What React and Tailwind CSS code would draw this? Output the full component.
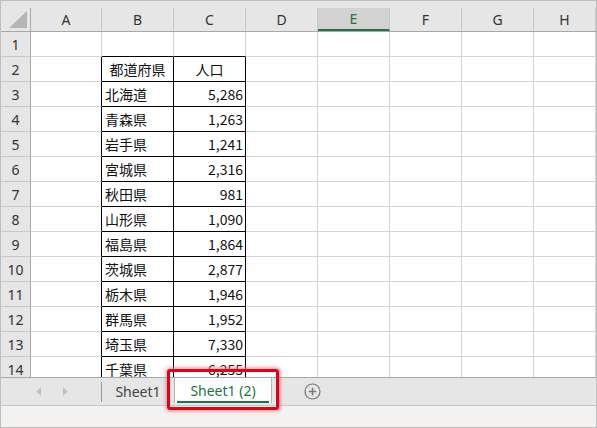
import React from "react";

const cols = ["A", "B", "C", "D", "E", "F", "G", "H"];
const colW = ["w-[71px]", "w-[72px]", "w-[72px]", "w-[72px]", "w-[72px]", "w-[72px]", "w-[72px]", "flex-1"];

const data = [
  ["北海道", "5,286"],
  ["青森県", "1,263"],
  ["岩手県", "1,241"],
  ["宮城県", "2,316"],
  ["秋田県", "981"],
  ["山形県", "1,090"],
  ["福島県", "1,864"],
  ["茨城県", "2,877"],
  ["栃木県", "1,946"],
  ["群馬県", "1,952"],
  ["埼玉県", "7,330"],
  ["千葉県", "6,255"],
];

const cellFont = { fontFamily: '"Noto Sans CJK JP", sans-serif' };

function Cell({ row, col }) {
  // 表の範囲は B2:C14
  const inTable = (col === 1 || col === 2) && row >= 2;
  const rightBlack = (col === 0 || col === 1 || col === 2) && row >= 2;
  const bottomBlack = (col === 1 || col === 2) && row >= 1;
  let text = null;
  let align = "justify-start pl-[3px]";
  if (inTable) {
    if (row === 2) {
      text = col === 1 ? "都道府県" : "人口";
      align = "justify-center";
    } else {
      const d = data[row - 3];
      text = col === 1 ? d[0] : d[1];
      align = col === 1 ? "justify-start pl-[3px]" : "justify-end pr-[2px]";
    }
  }
  return (
    <div
      className={`${colW[col]} h-full flex items-center shrink-0 border-r border-b text-[14px] text-[#111] ${align} ${
        rightBlack ? "border-r-black" : "border-r-[#d4d4d4]"
      } ${bottomBlack ? "border-b-black" : "border-b-[#d4d4d4]"}`}
      style={cellFont}
    >
      {text}
    </div>
  );
}

export default function App() {
  const rows = Array.from({ length: 14 }, (_, i) => i + 1);
  return (
    <div
      className="w-[597px] h-[428px] overflow-hidden bg-white border border-[#bfbfbf] flex flex-col relative"
      style={{ fontFamily: '"Noto Sans", sans-serif' }}
    >
      <div className="h-[7px] bg-[#e6e6e6] shrink-0" />

      {/* 列見出し */}
      <div className="h-[24px] flex shrink-0 bg-[#e6e6e6] border-b border-[#a8a8a8]">
        <div className="w-[30px] h-full border-r border-[#a8a8a8] relative shrink-0">
          <svg className="absolute right-[3px] bottom-[3px]" width="18" height="17" viewBox="0 0 18 17">
            <polygon points="18,0 18,17 0,17" fill="#b5b5b5" />
          </svg>
        </div>
        {cols.map((c, i) => (
          <div
            key={c}
            className={`${colW[i]} h-full flex items-center justify-center shrink-0 text-[14px] border-r border-[#c8c8c8] ${
              c === "E" ? "bg-[#d2d2d2] text-[#217346] border-b-2 border-b-[#217346]" : "text-[#333]"
            }`}
          >
            {c}
          </div>
        ))}
      </div>

      {/* セル */}
      <div className="h-[345px] overflow-hidden shrink-0">
        {rows.map((r) => (
          <div key={r} className="h-[25px] flex">
            <div className="w-[30px] h-full shrink-0 bg-[#e6e6e6] border-r border-r-[#a8a8a8] border-b border-b-[#c8c8c8] flex items-center justify-center text-[14px] text-[#333]">
              {r}
            </div>
            {cols.map((c, i) => (
              <Cell key={c} row={r} col={i} />
            ))}
          </div>
        ))}
      </div>

      {/* シートタブ */}
      <div className="h-[28px] shrink-0 bg-[#e6e6e6] border-t border-[#a8a8a8] flex items-center text-[14px]">
        <div className="w-[100px] flex items-center justify-center gap-[22px] pl-[2px] shrink-0">
          <svg width="5" height="9" viewBox="0 0 5 9">
            <polygon points="5,0 5,9 0,4.5" fill="#c4c4c4" />
          </svg>
          <svg width="5" height="9" viewBox="0 0 5 9">
            <polygon points="0,0 0,9 5,4.5" fill="#c4c4c4" />
          </svg>
        </div>
        <div className="w-px h-[20px] bg-[#9a9a9a] shrink-0" />
        <div className="w-[72px] text-center text-[#444] shrink-0">Sheet1</div>
        <div className="w-[98px] h-[25px] -mt-[3px] bg-white border-x border-[#b5b5b5] flex flex-col items-center justify-center shrink-0 relative">
          <span className="text-[#217346] mt-[1px]">Sheet1 (2)</span>
          <div className="absolute bottom-0 left-[2px] right-[2px] h-[2px] bg-[#217346]" />
        </div>
        <div className="ml-[32px] shrink-0">
          <svg width="17" height="17" viewBox="0 0 17 17">
            <circle cx="8.5" cy="8.5" r="7.5" fill="none" stroke="#7a7a7a" strokeWidth="1.2" />
            <path d="M8.5 4.8v7.4M4.8 8.5h7.4" stroke="#7a7a7a" strokeWidth="1.6" />
          </svg>
        </div>
      </div>

      {/* ステータスバー */}
      <div className="flex-1 bg-[#f3f2f1] border-t border-[#c6c6c6]" />

      {/* 赤枠の注釈 */}
      <div className="absolute left-[166px] top-[368px] w-[112px] h-[41px] border-[3px] border-[#e60012] rounded-[3px] shadow-[0_0_3px_2px_rgba(255,120,130,0.6)] pointer-events-none" />
    </div>
  );
}
